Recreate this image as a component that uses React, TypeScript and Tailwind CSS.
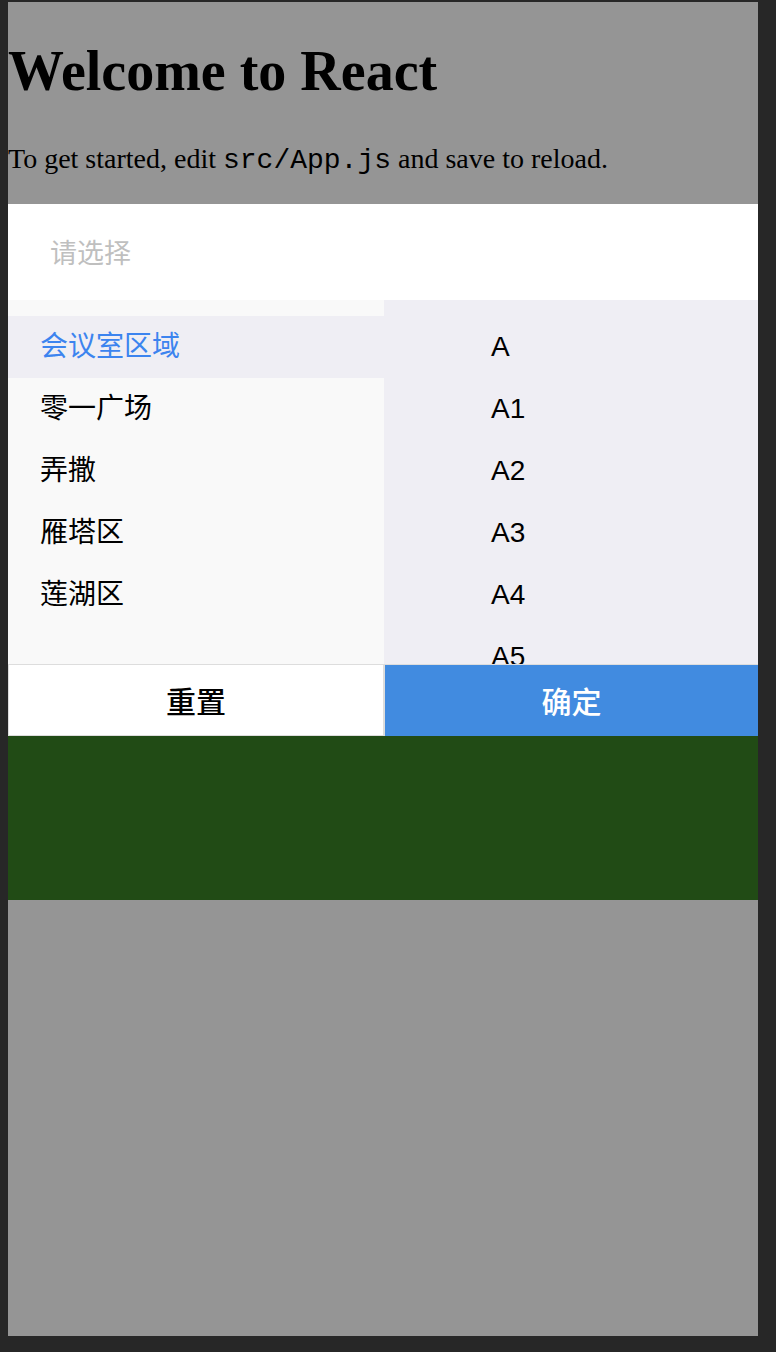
const areas = ['会议室区域', '零一广场', '弄撒', '雁塔区', '莲湖区']
const rooms = ['A', 'A1', 'A2', 'A3', 'A4', 'A5']

const App = () => {
  return (
    <div className="min-h-[1352px] bg-[#272727] pt-[2px] pl-[8px] pr-[18px] pb-[16px]">
      <div className="flex h-[1334px] w-[750px] flex-col bg-[#959595]">
        {/* header */}
        <header className="h-[202px] shrink-0 pt-[37px] font-['Liberation_Serif',serif] text-black">
          <h1 className="text-[56px] font-bold leading-[64px]">Welcome to React</h1>
          <p className="mt-[40px] text-[28px] leading-[32px]">
            To get started, edit{' '}
            <code className="font-['Liberation_Mono',monospace] text-[28px]">src/App.js</code> and save to reload.
          </p>
        </header>

        {/* select */}
        <div className="flex h-[96px] shrink-0 items-center bg-white pl-[42px] font-['Noto_Sans_CJK_SC',sans-serif] text-[27px] text-[#bfbfbf]">
          请选择
        </div>

        {/* picker */}
        <div className="flex h-[364px] shrink-0 overflow-hidden font-['Liberation_Sans','Noto_Sans_CJK_SC',sans-serif]">
          <ul className="w-[376px] bg-[#f9f9f9] pt-[16px]">
            {areas.map((a, i) => (
              <li
                key={a}
                className={
                  i === 0
                    ? 'flex h-[62px] items-center bg-[#efeef4] pl-[32px] text-[28px] text-[#3c84ef]'
                    : 'flex h-[62px] items-center pl-[32px] text-[28px] text-black'
                }
              >
                {a}
              </li>
            ))}
          </ul>
          <ul className="flex-1 bg-[#efeef4] pt-[16px]">
            {rooms.map((r) => (
              <li key={r} className="flex h-[62px] items-center pl-[107px] text-[28px] text-black">
                {r}
              </li>
            ))}
          </ul>
        </div>

        {/* actions */}
        <div className="flex h-[72px] shrink-0 font-['Noto_Sans_CJK_SC',sans-serif] text-[30px] font-medium">
          <button className="w-[376px] border border-[#dddddd] bg-white text-black">重置</button>
          <button className="flex-1 border-t border-l border-[#dddddd] bg-[#418be0] text-white">确定</button>
        </div>

        <div className="h-[164px] shrink-0 bg-[#214b15]" />
      </div>
    </div>
  )
}

export default App
